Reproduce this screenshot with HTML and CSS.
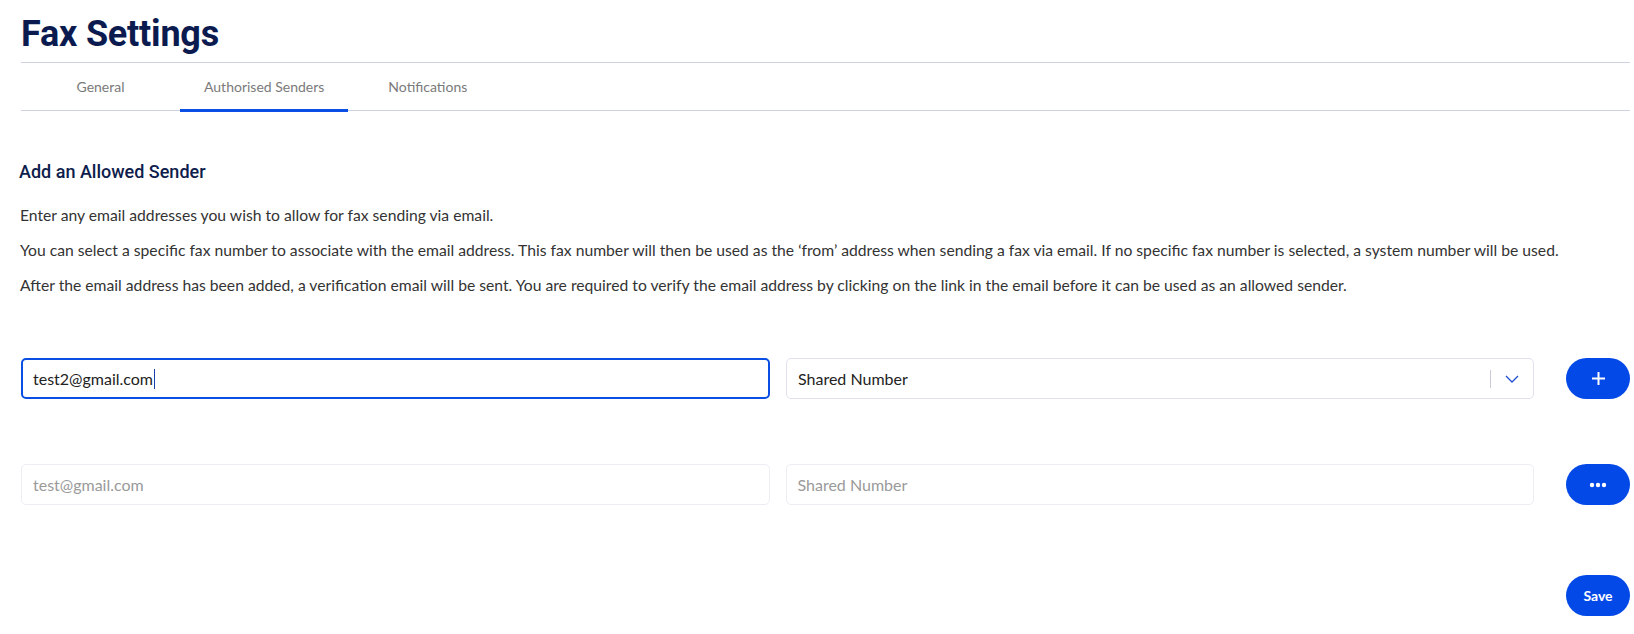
FILE: index.html
```html
<!DOCTYPE html>
<html lang="en">
<head>
<meta charset="utf-8">
<title>Fax Settings</title>
<link rel="stylesheet" href="styles.css">
</head>
<body>
<div class="page">
  <h1 class="title">Fax Settings</h1>
  <nav class="tabs">
    <div class="tab">General</div>
    <div class="tab active">Authorised Senders</div>
    <div class="tab">Notifications</div>
  </nav>
  <section class="content">
    <h2 class="heading">Add an Allowed Sender</h2>
    <p class="para">Enter any email addresses you wish to allow for fax sending via email.</p>
    <p class="para">You can select a specific fax number to associate with the email address. This fax number will then be used as the ‘from’ address when sending a fax via email. If no specific fax number is selected, a system number will be used.</p>
    <p class="para">After the email address has been added, a verification email will be sent. You are required to verify the email address by clicking on the link in the email before it can be used as an allowed sender.</p>

    <div class="row row-first">
      <div class="field focused"><span class="value">test2@gmail.com</span><span class="caret"></span></div>
      <div class="field select">
        <span class="value">Shared Number</span>
        <span class="select-indicators">
          <span class="divider"></span>
          <svg class="chevron" width="14" height="8" viewBox="0 0 14 8"><path d="M1 1 L7 7 L13 1" fill="none" stroke="#1f4fd1" stroke-width="1.3"/></svg>
        </span>
      </div>
      <button class="btn-round" aria-label="Add">
        <svg width="15" height="15" viewBox="0 0 15 15"><path d="M7.5 1 V14 M1 7.5 H14" stroke="#fff" stroke-width="2"/></svg>
      </button>
    </div>

    <div class="row row-second">
      <div class="field disabled"><span class="placeholder">test@gmail.com</span></div>
      <div class="field disabled"><span class="placeholder">Shared Number</span></div>
      <button class="btn-round" aria-label="More">
        <svg width="18" height="6" viewBox="0 0 18 6"><circle cx="3" cy="3" r="2.2" fill="#fff"/><circle cx="9" cy="3" r="2.2" fill="#fff"/><circle cx="15" cy="3" r="2.2" fill="#fff"/></svg>
      </button>
    </div>

    <div class="actions">
      <button class="btn-round btn-save">Save</button>
    </div>
  </section>
</div>
</body>
</html>
```

FILE: styles.css
```css
* { box-sizing: border-box; }
html, body { margin: 0; padding: 0; background: #fff; }
body { font-family: "Lato", "Liberation Sans", sans-serif; color: #333; }

.page {
  padding: 13px 4px 0 21px;
  display: flex;
  flex-direction: column;
}

.title {
  margin: 0;
  font-family: "Roboto", "Liberation Sans", sans-serif;
  font-weight: 700;
  font-size: 36px;
  line-height: 43px;
  color: #0c1b4f;
  padding-bottom: 6px;
  border-bottom: 1px solid #cdd2e2;
  letter-spacing: -0.2px;
}

.tabs {
  display: flex;
  border-bottom: 1px solid #cdd2e2;
  height: 48px;
}
.tab {
  min-width: 159px;
  padding: 0 24px;
  display: flex;
  align-items: center;
  justify-content: center;
  font-size: 14px;
  color: #7a7a7a;
  border-bottom: 3px solid transparent;
  margin-bottom: -2px;
}
.tab.active { border-bottom-color: #0a4ee4; }

.content { display: flex; flex-direction: column; }

.heading {
  margin: 50px 0 0 -2px;
  font-family: "Roboto", "Liberation Sans", sans-serif;
  font-weight: 500;
  font-size: 18px;
  line-height: 21px;
  color: #0e1d4c;
}

.para {
  margin: 23px 0 0 -1px;
  font-size: 15.7px;
  line-height: 21px;
  color: #333;
}
.para + .para { margin-top: 14px; }

.row {
  display: flex;
  align-items: center;
  gap: 16px;
}
.row-first { margin-top: 62px; }
.row-second { margin-top: 65px; }

.field {
  flex: 1;
  height: 41px;
  border: 1px solid #dfe1ec;
  border-radius: 5px;
  display: flex;
  align-items: center;
  padding: 0 11px;
  font-size: 16px;
  color: #222;
}
.field.focused { border: 2px solid #0a4ee4; padding: 0 10px; }
.caret { display: inline-block; width: 1px; height: 20px; background: #1a3fb0; margin-left: 1px; }
.field.select { justify-content: space-between; padding-right: 10px; }
.select-indicators { display: flex; align-items: center; }
.divider { width: 1px; height: 18px; background: #c9ccd6; margin-right: 14px; }
.chevron { display: block; margin-right: 4px; }

.field.disabled { border-color: #eceef3; }
.placeholder { color: #9a9a9a; }

.btn-round {
  flex: 0 0 64px;
  width: 64px;
  height: 41px;
  margin-left: 16px;
  border: none;
  border-radius: 21px;
  background: #0349e8;
  color: #fff;
  display: flex;
  align-items: center;
  justify-content: center;
  padding: 0;
}

.actions {
  display: flex;
  justify-content: flex-end;
  margin-top: 70px;
}
.btn-save {
  font-family: "Lato", "Liberation Sans", sans-serif;
  font-weight: 700;
  font-size: 14px;
}
```
